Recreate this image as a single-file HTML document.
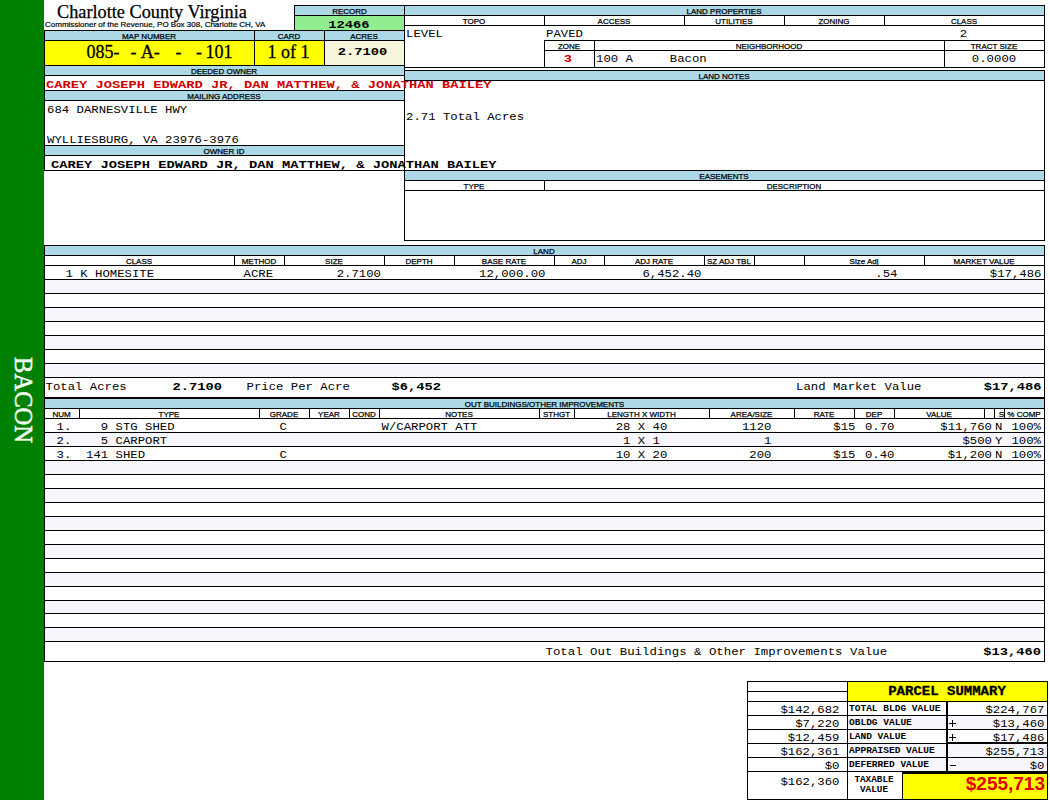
<!DOCTYPE html>
<html><head><meta charset="utf-8"><title>Charlotte County Virginia - Parcel</title>
<style>
html,body{margin:0;padding:0;}
body{width:1050px;height:800px;overflow:hidden;position:relative;background:#fff;}
.a{position:absolute;}
.t{position:absolute;white-space:pre;}
</style></head><body>
<div class="a" style="left:0px;top:0px;width:44px;height:800px;background:#008000"></div>
<div class="a" style="left:295px;top:6px;width:109px;height:9px;background:#ADD8E6"></div>
<div class="a" style="left:295px;top:16px;width:109px;height:14px;background:#90EE90"></div>
<div class="a" style="left:45px;top:31px;width:359px;height:9px;background:#ADD8E6"></div>
<div class="a" style="left:45px;top:41px;width:209px;height:24px;background:#FFFF00"></div>
<div class="a" style="left:255px;top:41px;width:69px;height:24px;background:#FFFF00"></div>
<div class="a" style="left:325px;top:41px;width:79px;height:24px;background:#F5F5DC"></div>
<div class="a" style="left:45px;top:66px;width:359px;height:9px;background:#ADD8E6"></div>
<div class="a" style="left:45px;top:91px;width:359px;height:9px;background:#ADD8E6"></div>
<div class="a" style="left:45px;top:146px;width:359px;height:9px;background:#ADD8E6"></div>
<div class="a" style="left:405px;top:6px;width:639px;height:9px;background:#ADD8E6"></div>
<div class="a" style="left:405px;top:71px;width:639px;height:9px;background:#ADD8E6"></div>
<div class="a" style="left:405px;top:171px;width:639px;height:9px;background:#ADD8E6"></div>
<div class="a" style="left:45px;top:246px;width:999px;height:9px;background:#ADD8E6"></div>
<div class="a" style="left:45px;top:280px;width:999px;height:13px;background:#F6F6FC"></div>
<div class="a" style="left:45px;top:308px;width:999px;height:13px;background:#F6F6FC"></div>
<div class="a" style="left:45px;top:336px;width:999px;height:13px;background:#F6F6FC"></div>
<div class="a" style="left:45px;top:364px;width:999px;height:13px;background:#F6F6FC"></div>
<div class="a" style="left:45px;top:399px;width:999px;height:9px;background:#ADD8E6"></div>
<div class="a" style="left:45px;top:433px;width:999px;height:13px;background:#F6F6FC"></div>
<div class="a" style="left:45px;top:461px;width:999px;height:13px;background:#F6F6FC"></div>
<div class="a" style="left:45px;top:489px;width:999px;height:13px;background:#F6F6FC"></div>
<div class="a" style="left:45px;top:517px;width:999px;height:13px;background:#F6F6FC"></div>
<div class="a" style="left:45px;top:545px;width:999px;height:13px;background:#F6F6FC"></div>
<div class="a" style="left:45px;top:573px;width:999px;height:13px;background:#F6F6FC"></div>
<div class="a" style="left:45px;top:601px;width:999px;height:12px;background:#F6F6FC"></div>
<div class="a" style="left:45px;top:628px;width:999px;height:13px;background:#F6F6FC"></div>
<div class="a" style="left:848px;top:682px;width:199px;height:19px;background:#FFFF00"></div>
<div class="a" style="left:848px;top:716px;width:98px;height:13px;background:#F6F6FC"></div>
<div class="a" style="left:948px;top:716px;width:99px;height:13px;background:#F6F6FC"></div>
<div class="a" style="left:848px;top:744px;width:98px;height:13px;background:#F6F6FC"></div>
<div class="a" style="left:948px;top:744px;width:99px;height:13px;background:#F6F6FC"></div>
<div class="a" style="left:848px;top:758px;width:98px;height:13px;background:#F6F6FC"></div>
<div class="a" style="left:948px;top:758px;width:99px;height:13px;background:#F6F6FC"></div>
<div class="a" style="left:903px;top:774px;width:144px;height:25px;background:#FFFF00"></div>
<div class="a" style="left:294px;top:5px;width:111px;height:1px;background:#000"></div>
<div class="a" style="left:294px;top:15px;width:111px;height:1px;background:#000"></div>
<div class="a" style="left:294px;top:5px;width:1px;height:26px;background:#000"></div>
<div class="a" style="left:44px;top:30px;width:361px;height:1px;background:#000"></div>
<div class="a" style="left:44px;top:40px;width:361px;height:1px;background:#000"></div>
<div class="a" style="left:44px;top:65px;width:361px;height:1px;background:#000"></div>
<div class="a" style="left:44px;top:75px;width:361px;height:1px;background:#000"></div>
<div class="a" style="left:44px;top:90px;width:361px;height:1px;background:#000"></div>
<div class="a" style="left:44px;top:100px;width:361px;height:1px;background:#000"></div>
<div class="a" style="left:44px;top:145px;width:361px;height:1px;background:#000"></div>
<div class="a" style="left:44px;top:155px;width:361px;height:1px;background:#000"></div>
<div class="a" style="left:44px;top:170px;width:361px;height:1px;background:#000"></div>
<div class="a" style="left:44px;top:30px;width:1px;height:141px;background:#000"></div>
<div class="a" style="left:404px;top:5px;width:1px;height:166px;background:#000"></div>
<div class="a" style="left:254px;top:30px;width:1px;height:36px;background:#000"></div>
<div class="a" style="left:324px;top:30px;width:1px;height:36px;background:#000"></div>
<div class="a" style="left:404px;top:5px;width:641px;height:1px;background:#000"></div>
<div class="a" style="left:404px;top:15px;width:641px;height:1px;background:#000"></div>
<div class="a" style="left:404px;top:25px;width:641px;height:1px;background:#000"></div>
<div class="a" style="left:404px;top:67px;width:641px;height:1px;background:#000"></div>
<div class="a" style="left:1044px;top:5px;width:1px;height:63px;background:#000"></div>
<div class="a" style="left:544px;top:15px;width:1px;height:11px;background:#000"></div>
<div class="a" style="left:684px;top:15px;width:1px;height:11px;background:#000"></div>
<div class="a" style="left:784px;top:15px;width:1px;height:11px;background:#000"></div>
<div class="a" style="left:884px;top:15px;width:1px;height:11px;background:#000"></div>
<div class="a" style="left:544px;top:40px;width:501px;height:1px;background:#000"></div>
<div class="a" style="left:544px;top:50px;width:501px;height:1px;background:#000"></div>
<div class="a" style="left:544px;top:40px;width:1px;height:28px;background:#000"></div>
<div class="a" style="left:594px;top:40px;width:1px;height:28px;background:#000"></div>
<div class="a" style="left:944px;top:40px;width:1px;height:28px;background:#000"></div>
<div class="a" style="left:404px;top:70px;width:641px;height:1px;background:#000"></div>
<div class="a" style="left:404px;top:80px;width:641px;height:1px;background:#000"></div>
<div class="a" style="left:404px;top:170px;width:641px;height:1px;background:#000"></div>
<div class="a" style="left:404px;top:180px;width:641px;height:1px;background:#000"></div>
<div class="a" style="left:404px;top:190px;width:641px;height:1px;background:#000"></div>
<div class="a" style="left:404px;top:240px;width:641px;height:1px;background:#000"></div>
<div class="a" style="left:404px;top:70px;width:1px;height:171px;background:#000"></div>
<div class="a" style="left:1044px;top:70px;width:1px;height:171px;background:#000"></div>
<div class="a" style="left:544px;top:180px;width:1px;height:11px;background:#000"></div>
<div class="a" style="left:44px;top:245px;width:1001px;height:1px;background:#000"></div>
<div class="a" style="left:44px;top:255px;width:1001px;height:1px;background:#000"></div>
<div class="a" style="left:44px;top:265px;width:1001px;height:1px;background:#000"></div>
<div class="a" style="left:44px;top:279px;width:1001px;height:1px;background:#000"></div>
<div class="a" style="left:44px;top:293px;width:1001px;height:1px;background:#000"></div>
<div class="a" style="left:44px;top:307px;width:1001px;height:1px;background:#000"></div>
<div class="a" style="left:44px;top:321px;width:1001px;height:1px;background:#000"></div>
<div class="a" style="left:44px;top:335px;width:1001px;height:1px;background:#000"></div>
<div class="a" style="left:44px;top:349px;width:1001px;height:1px;background:#000"></div>
<div class="a" style="left:44px;top:363px;width:1001px;height:1px;background:#000"></div>
<div class="a" style="left:44px;top:377px;width:1001px;height:1px;background:#000"></div>
<div class="a" style="left:44px;top:397px;width:1001px;height:2px;background:#000"></div>
<div class="a" style="left:44px;top:245px;width:1px;height:417px;background:#000"></div>
<div class="a" style="left:1044px;top:245px;width:1px;height:417px;background:#000"></div>
<div class="a" style="left:234px;top:255px;width:1px;height:11px;background:#000"></div>
<div class="a" style="left:284px;top:255px;width:1px;height:11px;background:#000"></div>
<div class="a" style="left:384px;top:255px;width:1px;height:11px;background:#000"></div>
<div class="a" style="left:454px;top:255px;width:1px;height:11px;background:#000"></div>
<div class="a" style="left:554px;top:255px;width:1px;height:11px;background:#000"></div>
<div class="a" style="left:604px;top:255px;width:1px;height:11px;background:#000"></div>
<div class="a" style="left:704px;top:255px;width:1px;height:11px;background:#000"></div>
<div class="a" style="left:754px;top:255px;width:1px;height:11px;background:#000"></div>
<div class="a" style="left:804px;top:255px;width:1px;height:11px;background:#000"></div>
<div class="a" style="left:924px;top:255px;width:1px;height:11px;background:#000"></div>
<div class="a" style="left:44px;top:408px;width:1001px;height:1px;background:#000"></div>
<div class="a" style="left:44px;top:418px;width:1001px;height:1px;background:#000"></div>
<div class="a" style="left:44px;top:432px;width:1001px;height:1px;background:#000"></div>
<div class="a" style="left:44px;top:446px;width:1001px;height:1px;background:#000"></div>
<div class="a" style="left:44px;top:460px;width:1001px;height:1px;background:#000"></div>
<div class="a" style="left:44px;top:474px;width:1001px;height:1px;background:#000"></div>
<div class="a" style="left:44px;top:488px;width:1001px;height:1px;background:#000"></div>
<div class="a" style="left:44px;top:502px;width:1001px;height:1px;background:#000"></div>
<div class="a" style="left:44px;top:516px;width:1001px;height:1px;background:#000"></div>
<div class="a" style="left:44px;top:530px;width:1001px;height:1px;background:#000"></div>
<div class="a" style="left:44px;top:544px;width:1001px;height:1px;background:#000"></div>
<div class="a" style="left:44px;top:558px;width:1001px;height:1px;background:#000"></div>
<div class="a" style="left:44px;top:572px;width:1001px;height:1px;background:#000"></div>
<div class="a" style="left:44px;top:586px;width:1001px;height:1px;background:#000"></div>
<div class="a" style="left:44px;top:600px;width:1001px;height:1px;background:#000"></div>
<div class="a" style="left:44px;top:613px;width:1001px;height:1px;background:#000"></div>
<div class="a" style="left:44px;top:627px;width:1001px;height:1px;background:#000"></div>
<div class="a" style="left:44px;top:641px;width:1001px;height:1px;background:#000"></div>
<div class="a" style="left:44px;top:661px;width:1001px;height:1px;background:#000"></div>
<div class="a" style="left:79px;top:408px;width:1px;height:11px;background:#000"></div>
<div class="a" style="left:259px;top:408px;width:1px;height:11px;background:#000"></div>
<div class="a" style="left:309px;top:408px;width:1px;height:11px;background:#000"></div>
<div class="a" style="left:349px;top:408px;width:1px;height:11px;background:#000"></div>
<div class="a" style="left:379px;top:408px;width:1px;height:11px;background:#000"></div>
<div class="a" style="left:539px;top:408px;width:1px;height:11px;background:#000"></div>
<div class="a" style="left:574px;top:408px;width:1px;height:11px;background:#000"></div>
<div class="a" style="left:709px;top:408px;width:1px;height:11px;background:#000"></div>
<div class="a" style="left:794px;top:408px;width:1px;height:11px;background:#000"></div>
<div class="a" style="left:854px;top:408px;width:1px;height:11px;background:#000"></div>
<div class="a" style="left:894px;top:408px;width:1px;height:11px;background:#000"></div>
<div class="a" style="left:984px;top:408px;width:1px;height:11px;background:#000"></div>
<div class="a" style="left:994px;top:408px;width:1px;height:11px;background:#000"></div>
<div class="a" style="left:1004px;top:408px;width:1px;height:11px;background:#000"></div>
<div class="a" style="left:747px;top:681px;width:301px;height:1px;background:#000"></div>
<div class="a" style="left:747px;top:691px;width:101px;height:1px;background:#000"></div>
<div class="a" style="left:747px;top:701px;width:301px;height:1px;background:#000"></div>
<div class="a" style="left:747px;top:715px;width:301px;height:1px;background:#000"></div>
<div class="a" style="left:747px;top:729px;width:301px;height:1px;background:#000"></div>
<div class="a" style="left:747px;top:757px;width:301px;height:1px;background:#000"></div>
<div class="a" style="left:747px;top:743px;width:200px;height:1px;background:#000"></div>
<div class="a" style="left:946px;top:742px;width:102px;height:2px;background:#000"></div>
<div class="a" style="left:747px;top:771px;width:301px;height:1px;background:#000"></div>
<div class="a" style="left:902px;top:772px;width:146px;height:2px;background:#000"></div>
<div class="a" style="left:747px;top:799px;width:301px;height:1px;background:#000"></div>
<div class="a" style="left:747px;top:681px;width:1px;height:119px;background:#000"></div>
<div class="a" style="left:847px;top:681px;width:1px;height:119px;background:#000"></div>
<div class="a" style="left:1047px;top:681px;width:1px;height:119px;background:#000"></div>
<div class="a" style="left:946px;top:701px;width:2px;height:71px;background:#000"></div>
<div class="a" style="left:902px;top:771px;width:1px;height:29px;background:#000"></div>
<div class="t" style="font-family:'Liberation Serif', serif;font-size:18.25px;line-height:20px;top:2px;color:#000;font-weight:normal;left:57px;-webkit-text-stroke:0.25px #000;">Charlotte County Virginia</div>
<div class="t" style="font-family:'Liberation Sans', sans-serif;font-size:8px;line-height:9px;top:20px;color:#000;font-weight:normal;left:45px;-webkit-text-stroke:0.2px #000;">Commissioner of the Revenue, PO Box 308, Charlotte CH, VA</div>
<div class="t" style="font-family:'Liberation Sans', sans-serif;font-size:8px;line-height:9px;top:7px;color:#000;font-weight:normal;left:-150.5px;width:1000px;text-align:center;-webkit-text-stroke:0.25px #000;">RECORD</div>
<div class="t" style="font-family:'Liberation Mono', monospace;font-size:13.75px;line-height:15px;top:17px;color:#000;font-weight:bold;left:-151.0px;width:1000px;text-align:center;transform:scaleY(0.839);transform-origin:0 11px;">12466</div>
<div class="t" style="font-family:'Liberation Sans', sans-serif;font-size:8px;line-height:9px;top:32px;color:#000;font-weight:normal;left:-351.0px;width:1000px;text-align:center;-webkit-text-stroke:0.25px #000;">MAP NUMBER</div>
<div class="t" style="font-family:'Liberation Sans', sans-serif;font-size:8px;line-height:9px;top:32px;color:#000;font-weight:normal;left:-211.0px;width:1000px;text-align:center;-webkit-text-stroke:0.25px #000;">CARD</div>
<div class="t" style="font-family:'Liberation Sans', sans-serif;font-size:8px;line-height:9px;top:32px;color:#000;font-weight:normal;left:-136.0px;width:1000px;text-align:center;-webkit-text-stroke:0.25px #000;">ACRES</div>
<div class="t" style="font-family:'Liberation Serif', serif;font-size:18px;line-height:20px;top:42px;color:#000;font-weight:normal;left:86.5px;-webkit-text-stroke:0.3px #000;">085-</div>
<div class="t" style="font-family:'Liberation Serif', serif;font-size:18px;line-height:20px;top:42px;color:#000;font-weight:normal;left:130.5px;-webkit-text-stroke:0.3px #000;">-</div>
<div class="t" style="font-family:'Liberation Serif', serif;font-size:18px;line-height:20px;top:42px;color:#000;font-weight:normal;left:140.8px;-webkit-text-stroke:0.3px #000;">A-</div>
<div class="t" style="font-family:'Liberation Serif', serif;font-size:18px;line-height:20px;top:42px;color:#000;font-weight:normal;left:175.5px;-webkit-text-stroke:0.3px #000;">-</div>
<div class="t" style="font-family:'Liberation Serif', serif;font-size:18px;line-height:20px;top:42px;color:#000;font-weight:normal;left:196px;-webkit-text-stroke:0.3px #000;">-</div>
<div class="t" style="font-family:'Liberation Serif', serif;font-size:18px;line-height:20px;top:42px;color:#000;font-weight:normal;left:205.5px;-webkit-text-stroke:0.3px #000;">101</div>
<div class="t" style="font-family:'Liberation Serif', serif;font-size:18px;line-height:20px;top:42px;color:#000;font-weight:normal;left:-211.5px;width:1000px;text-align:center;-webkit-text-stroke:0.3px #000;">1 of 1</div>
<div class="t" style="font-family:'Liberation Mono', monospace;font-size:13.75px;line-height:15px;top:44px;color:#000;font-weight:bold;left:-137.5px;width:1000px;text-align:center;transform:scaleY(0.839);transform-origin:0 11px;">2.7100</div>
<div class="t" style="font-family:'Liberation Sans', sans-serif;font-size:8px;line-height:9px;top:67px;color:#000;font-weight:normal;left:-276.0px;width:1000px;text-align:center;-webkit-text-stroke:0.25px #000;">DEEDED OWNER</div>
<div class="t" style="font-family:'Liberation Mono', monospace;font-size:13.75px;line-height:15px;top:77px;color:#D00000;font-weight:bold;left:46px;transform:scaleY(0.839);transform-origin:0 11px;">CAREY JOSEPH EDWARD JR, DAN MATTHEW, &amp; JONATHAN BAILEY</div>
<div class="t" style="font-family:'Liberation Sans', sans-serif;font-size:8px;line-height:9px;top:92px;color:#000;font-weight:normal;left:-276.0px;width:1000px;text-align:center;-webkit-text-stroke:0.25px #000;">MAILING ADDRESS</div>
<div class="t" style="font-family:'Liberation Mono', monospace;font-size:12.3px;line-height:14px;top:103px;color:#000;font-weight:normal;left:47px;transform:scaleY(0.913);transform-origin:0 10px;">684 DARNESVILLE HWY</div>
<div class="t" style="font-family:'Liberation Mono', monospace;font-size:12.3px;line-height:14px;top:133px;color:#000;font-weight:normal;left:47px;transform:scaleY(0.913);transform-origin:0 10px;">WYLLIESBURG, VA 23976-3976</div>
<div class="t" style="font-family:'Liberation Sans', sans-serif;font-size:8px;line-height:9px;top:147px;color:#000;font-weight:normal;left:-276.0px;width:1000px;text-align:center;-webkit-text-stroke:0.25px #000;">OWNER ID</div>
<div class="t" style="font-family:'Liberation Mono', monospace;font-size:13.75px;line-height:15px;top:157px;color:#000;font-weight:bold;left:51px;transform:scaleY(0.839);transform-origin:0 11px;">CAREY JOSEPH EDWARD JR, DAN MATTHEW, &amp; JONATHAN BAILEY</div>
<div class="t" style="font-family:'Liberation Sans', sans-serif;font-size:8px;line-height:9px;top:7px;color:#000;font-weight:normal;left:224.0px;width:1000px;text-align:center;-webkit-text-stroke:0.25px #000;">LAND PROPERTIES</div>
<div class="t" style="font-family:'Liberation Sans', sans-serif;font-size:8px;line-height:9px;top:17px;color:#000;font-weight:normal;left:-26.0px;width:1000px;text-align:center;-webkit-text-stroke:0.25px #000;">TOPO</div>
<div class="t" style="font-family:'Liberation Sans', sans-serif;font-size:8px;line-height:9px;top:17px;color:#000;font-weight:normal;left:114.0px;width:1000px;text-align:center;-webkit-text-stroke:0.25px #000;">ACCESS</div>
<div class="t" style="font-family:'Liberation Sans', sans-serif;font-size:8px;line-height:9px;top:17px;color:#000;font-weight:normal;left:234.0px;width:1000px;text-align:center;-webkit-text-stroke:0.25px #000;">UTILITIES</div>
<div class="t" style="font-family:'Liberation Sans', sans-serif;font-size:8px;line-height:9px;top:17px;color:#000;font-weight:normal;left:334.0px;width:1000px;text-align:center;-webkit-text-stroke:0.25px #000;">ZONING</div>
<div class="t" style="font-family:'Liberation Sans', sans-serif;font-size:8px;line-height:9px;top:17px;color:#000;font-weight:normal;left:464.0px;width:1000px;text-align:center;-webkit-text-stroke:0.25px #000;">CLASS</div>
<div class="t" style="font-family:'Liberation Mono', monospace;font-size:12.3px;line-height:14px;top:27px;color:#000;font-weight:normal;left:406px;transform:scaleY(0.913);transform-origin:0 10px;">LEVEL</div>
<div class="t" style="font-family:'Liberation Mono', monospace;font-size:12.3px;line-height:14px;top:27px;color:#000;font-weight:normal;left:546px;transform:scaleY(0.913);transform-origin:0 10px;">PAVED</div>
<div class="t" style="font-family:'Liberation Mono', monospace;font-size:12.3px;line-height:14px;top:27px;color:#000;font-weight:normal;left:463.5px;width:1000px;text-align:center;transform:scaleY(0.913);transform-origin:0 10px;">2</div>
<div class="t" style="font-family:'Liberation Sans', sans-serif;font-size:8px;line-height:9px;top:42px;color:#000;font-weight:normal;left:69.0px;width:1000px;text-align:center;-webkit-text-stroke:0.25px #000;">ZONE</div>
<div class="t" style="font-family:'Liberation Sans', sans-serif;font-size:8px;line-height:9px;top:42px;color:#000;font-weight:normal;left:269.0px;width:1000px;text-align:center;-webkit-text-stroke:0.25px #000;">NEIGHBORHOOD</div>
<div class="t" style="font-family:'Liberation Sans', sans-serif;font-size:8px;line-height:9px;top:42px;color:#000;font-weight:normal;left:494.0px;width:1000px;text-align:center;-webkit-text-stroke:0.25px #000;">TRACT SIZE</div>
<div class="t" style="font-family:'Liberation Mono', monospace;font-size:13.75px;line-height:15px;top:51px;color:#D00000;font-weight:bold;left:68.0px;width:1000px;text-align:center;transform:scaleY(0.839);transform-origin:0 11px;">3</div>
<div class="t" style="font-family:'Liberation Mono', monospace;font-size:12.3px;line-height:14px;top:52px;color:#000;font-weight:normal;left:596px;transform:scaleY(0.913);transform-origin:0 10px;">100 A     Bacon</div>
<div class="t" style="font-family:'Liberation Mono', monospace;font-size:12.3px;line-height:14px;top:52px;color:#000;font-weight:normal;left:494.0px;width:1000px;text-align:center;transform:scaleY(0.913);transform-origin:0 10px;">0.0000</div>
<div class="t" style="font-family:'Liberation Sans', sans-serif;font-size:8px;line-height:9px;top:72px;color:#000;font-weight:normal;left:224.0px;width:1000px;text-align:center;-webkit-text-stroke:0.25px #000;">LAND NOTES</div>
<div class="t" style="font-family:'Liberation Mono', monospace;font-size:12.3px;line-height:14px;top:110px;color:#000;font-weight:normal;left:406px;transform:scaleY(0.913);transform-origin:0 10px;">2.71 Total Acres</div>
<div class="t" style="font-family:'Liberation Sans', sans-serif;font-size:8px;line-height:9px;top:172px;color:#000;font-weight:normal;left:224.0px;width:1000px;text-align:center;-webkit-text-stroke:0.25px #000;">EASEMENTS</div>
<div class="t" style="font-family:'Liberation Sans', sans-serif;font-size:8px;line-height:9px;top:182px;color:#000;font-weight:normal;left:-26.0px;width:1000px;text-align:center;-webkit-text-stroke:0.25px #000;">TYPE</div>
<div class="t" style="font-family:'Liberation Sans', sans-serif;font-size:8px;line-height:9px;top:182px;color:#000;font-weight:normal;left:294.0px;width:1000px;text-align:center;-webkit-text-stroke:0.25px #000;">DESCRIPTION</div>
<div class="t" style="font-family:'Liberation Sans', sans-serif;font-size:8px;line-height:9px;top:247px;color:#000;font-weight:normal;left:44.0px;width:1000px;text-align:center;-webkit-text-stroke:0.25px #000;">LAND</div>
<div class="t" style="font-family:'Liberation Sans', sans-serif;font-size:8px;line-height:9px;top:257px;color:#000;font-weight:normal;left:-361.0px;width:1000px;text-align:center;-webkit-text-stroke:0.25px #000;">CLASS</div>
<div class="t" style="font-family:'Liberation Sans', sans-serif;font-size:8px;line-height:9px;top:257px;color:#000;font-weight:normal;left:-241.0px;width:1000px;text-align:center;-webkit-text-stroke:0.25px #000;">METHOD</div>
<div class="t" style="font-family:'Liberation Sans', sans-serif;font-size:8px;line-height:9px;top:257px;color:#000;font-weight:normal;left:-166.0px;width:1000px;text-align:center;-webkit-text-stroke:0.25px #000;">SIZE</div>
<div class="t" style="font-family:'Liberation Sans', sans-serif;font-size:8px;line-height:9px;top:257px;color:#000;font-weight:normal;left:-81.0px;width:1000px;text-align:center;-webkit-text-stroke:0.25px #000;">DEPTH</div>
<div class="t" style="font-family:'Liberation Sans', sans-serif;font-size:8px;line-height:9px;top:257px;color:#000;font-weight:normal;left:4.0px;width:1000px;text-align:center;-webkit-text-stroke:0.25px #000;">BASE RATE</div>
<div class="t" style="font-family:'Liberation Sans', sans-serif;font-size:8px;line-height:9px;top:257px;color:#000;font-weight:normal;left:79.0px;width:1000px;text-align:center;-webkit-text-stroke:0.25px #000;">ADJ</div>
<div class="t" style="font-family:'Liberation Sans', sans-serif;font-size:8px;line-height:9px;top:257px;color:#000;font-weight:normal;left:154.0px;width:1000px;text-align:center;-webkit-text-stroke:0.25px #000;">ADJ RATE</div>
<div class="t" style="font-family:'Liberation Sans', sans-serif;font-size:8px;line-height:9px;top:257px;color:#000;font-weight:normal;left:364.0px;width:1000px;text-align:center;-webkit-text-stroke:0.25px #000;">Size Adj</div>
<div class="t" style="font-family:'Liberation Sans', sans-serif;font-size:8px;line-height:9px;top:257px;color:#000;font-weight:normal;left:484.0px;width:1000px;text-align:center;-webkit-text-stroke:0.25px #000;">MARKET VALUE</div>
<div class="t" style="font-family:'Liberation Sans', sans-serif;font-size:8px;line-height:9px;top:257px;color:#000;font-weight:normal;left:707px;-webkit-text-stroke:0.25px #000;">SZ ADJ TBL</div>
<div class="t" style="font-family:'Liberation Mono', monospace;font-size:12.3px;line-height:14px;top:267px;color:#000;font-weight:normal;left:65.5px;transform:scaleY(0.913);transform-origin:0 10px;">1 K HOMESITE</div>
<div class="t" style="font-family:'Liberation Mono', monospace;font-size:12.3px;line-height:14px;top:267px;color:#000;font-weight:normal;left:243.5px;transform:scaleY(0.913);transform-origin:0 10px;">ACRE</div>
<div class="t" style="font-family:'Liberation Mono', monospace;font-size:12.3px;line-height:14px;top:267px;color:#000;font-weight:normal;right:669px;text-align:right;transform:scaleY(0.913);transform-origin:0 10px;">2.7100</div>
<div class="t" style="font-family:'Liberation Mono', monospace;font-size:12.3px;line-height:14px;top:267px;color:#000;font-weight:normal;right:504.5px;text-align:right;transform:scaleY(0.913);transform-origin:0 10px;">12,000.00</div>
<div class="t" style="font-family:'Liberation Mono', monospace;font-size:12.3px;line-height:14px;top:267px;color:#000;font-weight:normal;right:348.5px;text-align:right;transform:scaleY(0.913);transform-origin:0 10px;">6,452.40</div>
<div class="t" style="font-family:'Liberation Mono', monospace;font-size:12.3px;line-height:14px;top:267px;color:#000;font-weight:normal;right:152.5px;text-align:right;transform:scaleY(0.913);transform-origin:0 10px;">.54</div>
<div class="t" style="font-family:'Liberation Mono', monospace;font-size:12.3px;line-height:14px;top:267px;color:#000;font-weight:normal;right:8.5px;text-align:right;transform:scaleY(0.913);transform-origin:0 10px;">$17,486</div>
<div class="t" style="font-family:'Liberation Mono', monospace;font-size:12.3px;line-height:14px;top:380px;color:#000;font-weight:normal;left:45.5px;transform:scaleY(0.913);transform-origin:0 10px;">Total Acres</div>
<div class="t" style="font-family:'Liberation Mono', monospace;font-size:13.75px;line-height:15px;top:379px;color:#000;font-weight:bold;left:172.5px;transform:scaleY(0.839);transform-origin:0 11px;">2.7100</div>
<div class="t" style="font-family:'Liberation Mono', monospace;font-size:12.3px;line-height:14px;top:380px;color:#000;font-weight:normal;left:246.5px;transform:scaleY(0.913);transform-origin:0 10px;">Price Per Acre</div>
<div class="t" style="font-family:'Liberation Mono', monospace;font-size:13.75px;line-height:15px;top:379px;color:#000;font-weight:bold;left:391.5px;transform:scaleY(0.839);transform-origin:0 11px;">$6,452</div>
<div class="t" style="font-family:'Liberation Mono', monospace;font-size:12.3px;line-height:14px;top:380px;color:#000;font-weight:normal;left:796px;transform:scaleY(0.913);transform-origin:0 10px;">Land Market Value</div>
<div class="t" style="font-family:'Liberation Mono', monospace;font-size:13.75px;line-height:15px;top:379px;color:#000;font-weight:bold;right:8.5px;text-align:right;transform:scaleY(0.839);transform-origin:0 11px;">$17,486</div>
<div class="t" style="font-family:'Liberation Sans', sans-serif;font-size:8px;line-height:9px;top:400px;color:#000;font-weight:normal;left:44.5px;width:1000px;text-align:center;-webkit-text-stroke:0.25px #000;">OUT BUILDINGS/OTHER IMPROVEMENTS</div>
<div class="t" style="font-family:'Liberation Sans', sans-serif;font-size:8px;line-height:9px;top:410px;color:#000;font-weight:normal;left:-438.5px;width:1000px;text-align:center;-webkit-text-stroke:0.25px #000;">NUM</div>
<div class="t" style="font-family:'Liberation Sans', sans-serif;font-size:8px;line-height:9px;top:410px;color:#000;font-weight:normal;left:-331.0px;width:1000px;text-align:center;-webkit-text-stroke:0.25px #000;">TYPE</div>
<div class="t" style="font-family:'Liberation Sans', sans-serif;font-size:8px;line-height:9px;top:410px;color:#000;font-weight:normal;left:-216.0px;width:1000px;text-align:center;-webkit-text-stroke:0.25px #000;">GRADE</div>
<div class="t" style="font-family:'Liberation Sans', sans-serif;font-size:8px;line-height:9px;top:410px;color:#000;font-weight:normal;left:-171.0px;width:1000px;text-align:center;-webkit-text-stroke:0.25px #000;">YEAR</div>
<div class="t" style="font-family:'Liberation Sans', sans-serif;font-size:8px;line-height:9px;top:410px;color:#000;font-weight:normal;left:-136.0px;width:1000px;text-align:center;-webkit-text-stroke:0.25px #000;">COND</div>
<div class="t" style="font-family:'Liberation Sans', sans-serif;font-size:8px;line-height:9px;top:410px;color:#000;font-weight:normal;left:-41.0px;width:1000px;text-align:center;-webkit-text-stroke:0.25px #000;">NOTES</div>
<div class="t" style="font-family:'Liberation Sans', sans-serif;font-size:8px;line-height:9px;top:410px;color:#000;font-weight:normal;left:56.5px;width:1000px;text-align:center;-webkit-text-stroke:0.25px #000;">STHGT</div>
<div class="t" style="font-family:'Liberation Sans', sans-serif;font-size:8px;line-height:9px;top:410px;color:#000;font-weight:normal;left:141.5px;width:1000px;text-align:center;-webkit-text-stroke:0.25px #000;">LENGTH X WIDTH</div>
<div class="t" style="font-family:'Liberation Sans', sans-serif;font-size:8px;line-height:9px;top:410px;color:#000;font-weight:normal;left:251.5px;width:1000px;text-align:center;-webkit-text-stroke:0.25px #000;">AREA/SIZE</div>
<div class="t" style="font-family:'Liberation Sans', sans-serif;font-size:8px;line-height:9px;top:410px;color:#000;font-weight:normal;left:324.0px;width:1000px;text-align:center;-webkit-text-stroke:0.25px #000;">RATE</div>
<div class="t" style="font-family:'Liberation Sans', sans-serif;font-size:8px;line-height:9px;top:410px;color:#000;font-weight:normal;left:374.0px;width:1000px;text-align:center;-webkit-text-stroke:0.25px #000;">DEP</div>
<div class="t" style="font-family:'Liberation Sans', sans-serif;font-size:8px;line-height:9px;top:410px;color:#000;font-weight:normal;left:439.0px;width:1000px;text-align:center;-webkit-text-stroke:0.25px #000;">VALUE</div>
<div class="t" style="font-family:'Liberation Sans', sans-serif;font-size:8px;line-height:9px;top:410px;color:#000;font-weight:normal;left:524.0px;width:1000px;text-align:center;-webkit-text-stroke:0.25px #000;">% COMP</div>
<div class="t" style="font-family:'Liberation Sans', sans-serif;font-size:8px;line-height:9px;top:410px;color:#000;font-weight:normal;right:46px;text-align:right;-webkit-text-stroke:0.25px #000;">S</div>
<div class="t" style="font-family:'Liberation Mono', monospace;font-size:12.3px;line-height:14px;top:420px;color:#000;font-weight:normal;left:56.5px;transform:scaleY(0.913);transform-origin:0 10px;">1.    9 STG SHED</div>
<div class="t" style="font-family:'Liberation Mono', monospace;font-size:12.3px;line-height:14px;top:420px;color:#000;font-weight:normal;left:279.5px;transform:scaleY(0.913);transform-origin:0 10px;">C</div>
<div class="t" style="font-family:'Liberation Mono', monospace;font-size:12.3px;line-height:14px;top:420px;color:#000;font-weight:normal;left:381.5px;transform:scaleY(0.913);transform-origin:0 10px;">W/CARPORT ATT</div>
<div class="t" style="font-family:'Liberation Mono', monospace;font-size:12.3px;line-height:14px;top:420px;color:#000;font-weight:normal;left:141.5px;width:1000px;text-align:center;transform:scaleY(0.913);transform-origin:0 10px;">28 X 40</div>
<div class="t" style="font-family:'Liberation Mono', monospace;font-size:12.3px;line-height:14px;top:420px;color:#000;font-weight:normal;right:278.5px;text-align:right;transform:scaleY(0.913);transform-origin:0 10px;">1120</div>
<div class="t" style="font-family:'Liberation Mono', monospace;font-size:12.3px;line-height:14px;top:420px;color:#000;font-weight:normal;right:194.5px;text-align:right;transform:scaleY(0.913);transform-origin:0 10px;">$15</div>
<div class="t" style="font-family:'Liberation Mono', monospace;font-size:12.3px;line-height:14px;top:420px;color:#000;font-weight:normal;right:155.5px;text-align:right;transform:scaleY(0.913);transform-origin:0 10px;">0.70</div>
<div class="t" style="font-family:'Liberation Mono', monospace;font-size:12.3px;line-height:14px;top:420px;color:#000;font-weight:normal;right:58px;text-align:right;transform:scaleY(0.913);transform-origin:0 10px;">$11,760</div>
<div class="t" style="font-family:'Liberation Mono', monospace;font-size:12.3px;line-height:14px;top:420px;color:#000;font-weight:normal;left:995px;transform:scaleY(0.913);transform-origin:0 10px;">N</div>
<div class="t" style="font-family:'Liberation Mono', monospace;font-size:12.3px;line-height:14px;top:420px;color:#000;font-weight:normal;right:9px;text-align:right;transform:scaleY(0.913);transform-origin:0 10px;">100%</div>
<div class="t" style="font-family:'Liberation Mono', monospace;font-size:12.3px;line-height:14px;top:434px;color:#000;font-weight:normal;left:56.5px;transform:scaleY(0.913);transform-origin:0 10px;">2.    5 CARPORT</div>
<div class="t" style="font-family:'Liberation Mono', monospace;font-size:12.3px;line-height:14px;top:434px;color:#000;font-weight:normal;left:141.5px;width:1000px;text-align:center;transform:scaleY(0.913);transform-origin:0 10px;">1 X 1</div>
<div class="t" style="font-family:'Liberation Mono', monospace;font-size:12.3px;line-height:14px;top:434px;color:#000;font-weight:normal;right:278.5px;text-align:right;transform:scaleY(0.913);transform-origin:0 10px;">1</div>
<div class="t" style="font-family:'Liberation Mono', monospace;font-size:12.3px;line-height:14px;top:434px;color:#000;font-weight:normal;right:58px;text-align:right;transform:scaleY(0.913);transform-origin:0 10px;">$500</div>
<div class="t" style="font-family:'Liberation Mono', monospace;font-size:12.3px;line-height:14px;top:434px;color:#000;font-weight:normal;left:995px;transform:scaleY(0.913);transform-origin:0 10px;">Y</div>
<div class="t" style="font-family:'Liberation Mono', monospace;font-size:12.3px;line-height:14px;top:434px;color:#000;font-weight:normal;right:9px;text-align:right;transform:scaleY(0.913);transform-origin:0 10px;">100%</div>
<div class="t" style="font-family:'Liberation Mono', monospace;font-size:12.3px;line-height:14px;top:448px;color:#000;font-weight:normal;left:56.5px;transform:scaleY(0.913);transform-origin:0 10px;">3.  141 SHED</div>
<div class="t" style="font-family:'Liberation Mono', monospace;font-size:12.3px;line-height:14px;top:448px;color:#000;font-weight:normal;left:279.5px;transform:scaleY(0.913);transform-origin:0 10px;">C</div>
<div class="t" style="font-family:'Liberation Mono', monospace;font-size:12.3px;line-height:14px;top:448px;color:#000;font-weight:normal;left:141.5px;width:1000px;text-align:center;transform:scaleY(0.913);transform-origin:0 10px;">10 X 20</div>
<div class="t" style="font-family:'Liberation Mono', monospace;font-size:12.3px;line-height:14px;top:448px;color:#000;font-weight:normal;right:278.5px;text-align:right;transform:scaleY(0.913);transform-origin:0 10px;">200</div>
<div class="t" style="font-family:'Liberation Mono', monospace;font-size:12.3px;line-height:14px;top:448px;color:#000;font-weight:normal;right:194.5px;text-align:right;transform:scaleY(0.913);transform-origin:0 10px;">$15</div>
<div class="t" style="font-family:'Liberation Mono', monospace;font-size:12.3px;line-height:14px;top:448px;color:#000;font-weight:normal;right:155.5px;text-align:right;transform:scaleY(0.913);transform-origin:0 10px;">0.40</div>
<div class="t" style="font-family:'Liberation Mono', monospace;font-size:12.3px;line-height:14px;top:448px;color:#000;font-weight:normal;right:58px;text-align:right;transform:scaleY(0.913);transform-origin:0 10px;">$1,200</div>
<div class="t" style="font-family:'Liberation Mono', monospace;font-size:12.3px;line-height:14px;top:448px;color:#000;font-weight:normal;left:995px;transform:scaleY(0.913);transform-origin:0 10px;">N</div>
<div class="t" style="font-family:'Liberation Mono', monospace;font-size:12.3px;line-height:14px;top:448px;color:#000;font-weight:normal;right:9px;text-align:right;transform:scaleY(0.913);transform-origin:0 10px;">100%</div>
<div class="t" style="font-family:'Liberation Mono', monospace;font-size:12.38px;line-height:14px;top:645px;color:#000;font-weight:normal;left:545.5px;transform:scaleY(0.907);transform-origin:0 10px;">Total Out Buildings &amp; Other Improvements Value</div>
<div class="t" style="font-family:'Liberation Mono', monospace;font-size:13.75px;line-height:15px;top:644px;color:#000;font-weight:bold;right:9px;text-align:right;transform:scaleY(0.839);transform-origin:0 11px;">$13,460</div>
<div class="t" style="font-family:'Liberation Mono', monospace;font-size:14.0px;line-height:16px;top:683px;color:#000;font-weight:bold;left:447.0px;width:1000px;text-align:center;transform:scaleY(0.868);transform-origin:0 12px;-webkit-text-stroke:0.35px #000;">PARCEL SUMMARY</div>
<div class="t" style="font-family:'Liberation Mono', monospace;font-size:9.53px;line-height:11px;top:703px;color:#000;font-weight:bold;left:849px;transform:scaleY(0.924);transform-origin:0 8px;">TOTAL BLDG VALUE</div>
<div class="t" style="font-family:'Liberation Mono', monospace;font-size:9.53px;line-height:11px;top:717px;color:#000;font-weight:bold;left:849px;transform:scaleY(0.924);transform-origin:0 8px;">OBLDG VALUE</div>
<div class="t" style="font-family:'Liberation Mono', monospace;font-size:9.53px;line-height:11px;top:731px;color:#000;font-weight:bold;left:849px;transform:scaleY(0.924);transform-origin:0 8px;">LAND VALUE</div>
<div class="t" style="font-family:'Liberation Mono', monospace;font-size:9.53px;line-height:11px;top:745px;color:#000;font-weight:bold;left:849px;transform:scaleY(0.924);transform-origin:0 8px;">APPRAISED VALUE</div>
<div class="t" style="font-family:'Liberation Mono', monospace;font-size:9.53px;line-height:11px;top:759px;color:#000;font-weight:bold;left:849px;transform:scaleY(0.924);transform-origin:0 8px;">DEFERRED VALUE</div>
<div class="t" style="font-family:'Liberation Mono', monospace;font-size:9.33px;line-height:11px;top:774px;color:#000;font-weight:bold;left:374.0px;width:1000px;text-align:center;transform:scaleY(0.944);transform-origin:0 8px;">TAXABLE</div>
<div class="t" style="font-family:'Liberation Mono', monospace;font-size:9.33px;line-height:11px;top:784px;color:#000;font-weight:bold;left:374.0px;width:1000px;text-align:center;transform:scaleY(0.944);transform-origin:0 8px;">VALUE</div>
<div class="t" style="font-family:'Liberation Mono', monospace;font-size:12.3px;line-height:14px;top:703px;color:#000;font-weight:normal;right:210.5px;text-align:right;transform:scaleY(0.913);transform-origin:0 10px;">$142,682</div>
<div class="t" style="font-family:'Liberation Mono', monospace;font-size:12.3px;line-height:14px;top:717px;color:#000;font-weight:normal;right:210.5px;text-align:right;transform:scaleY(0.913);transform-origin:0 10px;">$7,220</div>
<div class="t" style="font-family:'Liberation Mono', monospace;font-size:12.3px;line-height:14px;top:731px;color:#000;font-weight:normal;right:210.5px;text-align:right;transform:scaleY(0.913);transform-origin:0 10px;">$12,459</div>
<div class="t" style="font-family:'Liberation Mono', monospace;font-size:12.3px;line-height:14px;top:745px;color:#000;font-weight:normal;right:210.5px;text-align:right;transform:scaleY(0.913);transform-origin:0 10px;">$162,361</div>
<div class="t" style="font-family:'Liberation Mono', monospace;font-size:12.3px;line-height:14px;top:759px;color:#000;font-weight:normal;right:210.5px;text-align:right;transform:scaleY(0.913);transform-origin:0 10px;">$0</div>
<div class="t" style="font-family:'Liberation Mono', monospace;font-size:12.3px;line-height:14px;top:775px;color:#000;font-weight:normal;right:210.5px;text-align:right;transform:scaleY(0.913);transform-origin:0 10px;">$162,360</div>
<div class="t" style="font-family:'Liberation Mono', monospace;font-size:12.3px;line-height:14px;top:703px;color:#000;font-weight:normal;right:5.5px;text-align:right;transform:scaleY(0.913);transform-origin:0 10px;">$224,767</div>
<div class="t" style="font-family:'Liberation Mono', monospace;font-size:12.3px;line-height:14px;top:717px;color:#000;font-weight:normal;right:5.5px;text-align:right;transform:scaleY(0.913);transform-origin:0 10px;">$13,460</div>
<div class="t" style="font-family:'Liberation Mono', monospace;font-size:12.3px;line-height:14px;top:731px;color:#000;font-weight:normal;right:5.5px;text-align:right;transform:scaleY(0.913);transform-origin:0 10px;">$17,486</div>
<div class="t" style="font-family:'Liberation Mono', monospace;font-size:12.3px;line-height:14px;top:745px;color:#000;font-weight:normal;right:5.5px;text-align:right;transform:scaleY(0.913);transform-origin:0 10px;">$255,713</div>
<div class="t" style="font-family:'Liberation Mono', monospace;font-size:12.3px;line-height:14px;top:759px;color:#000;font-weight:normal;right:5.5px;text-align:right;transform:scaleY(0.913);transform-origin:0 10px;">$0</div>
<div class="a" style="left:949px;top:723px;width:7px;height:1px;background:#000"></div>
<div class="a" style="left:952px;top:720px;width:1px;height:7px;background:#000"></div>
<div class="a" style="left:949px;top:737px;width:7px;height:1px;background:#000"></div>
<div class="a" style="left:952px;top:734px;width:1px;height:7px;background:#000"></div>
<div class="a" style="left:950px;top:765px;width:6px;height:1px;background:#000"></div>
<div class="t" style="font-family:'Liberation Sans', sans-serif;font-size:19px;line-height:21px;top:773px;color:#E00000;font-weight:bold;right:5px;text-align:right;">$255,713</div>
<div class="t" style="left:-27px;top:387px;width:100px;line-height:26px;text-align:center;font-family:'Liberation Serif',serif;font-size:24.5px;color:#F0FFF0;-webkit-text-stroke:0.5px #F0FFF0;transform:rotate(90deg);">BACON</div>
</body></html>
